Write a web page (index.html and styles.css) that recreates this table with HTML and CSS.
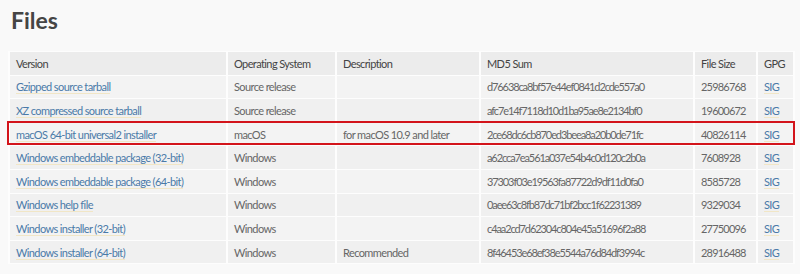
FILE: index.html
```html
<!DOCTYPE html>
<html>
<head>
<meta charset="utf-8">
<link rel="stylesheet" href="styles.css">
</head>
<body>
<h1 class="title">Files</h1>
<div class="wrap">
<table class="files">
<colgroup>
<col class="c-ver"><col class="c-os"><col class="c-desc"><col class="c-md5"><col class="c-size"><col class="c-gpg">
</colgroup>
<thead>
<tr><th>Version</th><th>Operating System</th><th>Description</th><th>MD5 Sum</th><th>File Size</th><th>GPG</th></tr>
</thead>
<tbody>
<tr><td><a href="#">Gzipped source tarball</a></td><td>Source release</td><td></td><td class="hash">d76638ca8bf57e44ef0841d2cde557a0</td><td class="num">25986768</td><td><a href="#">SIG</a></td></tr>
<tr><td><a href="#">XZ compressed source tarball</a></td><td>Source release</td><td></td><td class="hash">afc7e14f7118d10d1ba95ae8e2134bf0</td><td class="num">19600672</td><td><a href="#">SIG</a></td></tr>
<tr><td><a href="#">macOS 64-bit universal2 installer</a></td><td>macOS</td><td>for macOS 10.9 and later</td><td class="hash">2ce68dc6cb870ed3beea8a20b0de71fc</td><td class="num">40826114</td><td><a href="#">SIG</a></td></tr>
<tr><td><a href="#">Windows embeddable package (32-bit)</a></td><td>Windows</td><td></td><td class="hash">a62cca7ea561a037e54b4c0d120c2b0a</td><td class="num">7608928</td><td><a href="#">SIG</a></td></tr>
<tr><td><a href="#">Windows embeddable package (64-bit)</a></td><td>Windows</td><td></td><td class="hash">37303f03e19563fa87722d9df11d0fa0</td><td class="num">8585728</td><td><a href="#">SIG</a></td></tr>
<tr><td><a href="#">Windows help file</a></td><td>Windows</td><td></td><td class="hash">0aee63c8fb87dc71bf2bcc1f62231389</td><td class="num">9329034</td><td><a href="#">SIG</a></td></tr>
<tr><td><a href="#">Windows installer (32-bit)</a></td><td>Windows</td><td></td><td class="hash">c4aa2cd7d62304c804e45a51696f2a88</td><td class="num">27750096</td><td><a href="#">SIG</a></td></tr>
<tr><td><a href="#">Windows installer (64-bit)</a></td><td>Windows</td><td>Recommended</td><td class="hash">8f46453e68ef38e5544a76d84df3994c</td><td class="num">28916488</td><td><a href="#">SIG</a></td></tr>
</tbody>
</table>
<div class="highlight"></div>
</div>
</body>
</html>
```
FILE: styles.css
```css
html, body {
  margin: 0;
  padding: 0;
  background: #f9f9f9;
}
body {
  font-family: "Lato", "Liberation Sans", sans-serif;
  color: #666;
  padding: 6px 5px 0 8px;
}
.title {
  margin: 0 0 0 3px;
  font-size: 23px;
  font-weight: 700;
  color: #454545;
  line-height: 28px;
}
.wrap {
  position: relative;
  margin-top: 17px;
  width: 787px;
}
.files {
  border-collapse: separate;
  border-spacing: 2px 1px;
  width: 787px;
  font-size: 11px;
  letter-spacing: -0.6px;
  table-layout: fixed;
  background: #fdfdfd;
}
.files th, .files td {
  text-align: left;
  padding: 0 4px 0 6px;
  height: 22.6px;
  white-space: nowrap;
  overflow: hidden;
}
.files th {
  background: #ececec;
  font-weight: 400;
  color: #444;
}
.files td {
  background: #f3f3f3;
}
.files tbody tr:nth-child(even) td {
  background: #f0f0f0;
}
.files .hash {
  letter-spacing: -1.1px;
}
.files .num {
  letter-spacing: -0.8px;
}
.files a {
  color: #4a7aa8;
  text-decoration: none;
  border-bottom: 1px solid #f1e6c6;
}
.c-ver { width: 216px; }
.c-os { width: 107px; }
.c-desc { width: 142px; }
.c-md5 { width: 212px; }
.c-size { width: 61px; }
.c-gpg { width: 35px; }
.highlight {
  position: absolute;
  left: -1px;
  top: 70px;
  width: 784px;
  height: 20px;
  border: 2px solid #d3141b;
  pointer-events: none;
}
```
